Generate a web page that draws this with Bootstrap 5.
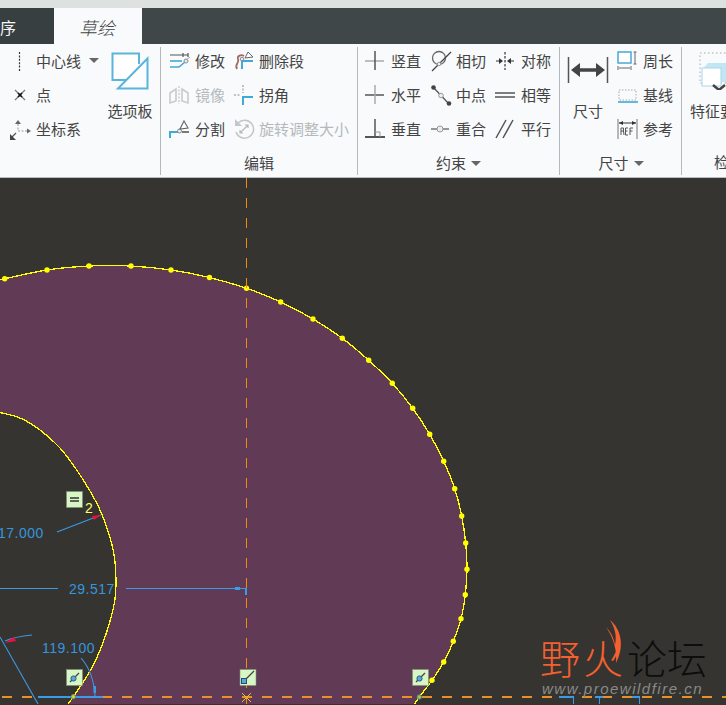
<!DOCTYPE html>
<html lang="zh">
<head>
<meta charset="utf-8">
<title>草绘</title>
<link href="https://cdn.jsdelivr.net/npm/bootstrap@5.3.0/dist/css/bootstrap.min.css" rel="stylesheet">
<style>
html,body{margin:0;height:705px;overflow:hidden;background:#353431}
body{font-family:"Noto Sans CJK SC","Noto Sans",sans-serif;font-size:15px;line-height:20px;color:#444}
.app-shell{width:726px;height:705px;overflow:hidden}
.top-strip{height:8px;background:#dde2e0}
.tab-bar{height:36px;background:#3f4748}
.tab-old{width:54px;background:#383f41;color:#f4f6f6;font-size:16px;line-height:38px}
.tab-on{width:88px;background:#f8fafb;color:#444;font-size:18px;font-style:italic;line-height:38px;font-weight:300;text-align:center;padding-right:2px}
.ribbon{height:134px;background:#f8fafb;overflow:hidden;border-bottom:1px solid #b9bdbf}
.rib-sep{width:1px;margin:3px 0 2px;background:#b4b9bb;flex:none}
.rib-group{flex:none;height:133px}
.rib-body{height:102px}
.rib-label{height:32px;line-height:34px;white-space:nowrap}
.g1{width:160px}.g2{width:196px}.g3{width:201px}.g4{width:121px;padding-left:5px}.g5{width:94px}
.g1-tools{width:99px;padding-left:2px}
.g2-tools{padding-left:8px}
.g3-tools{padding-left:7px}
.col-64{width:64px}
.col-65{width:65px}
.g5-body{padding:8px 0 0 8px;white-space:nowrap}
.g5-icon{display:block;margin:0 0 11px 2px}
.tool{height:34px;display:flex;align-items:center;gap:4px;white-space:nowrap}
.tool svg{flex:none;width:22px;height:22px}
.tool-off{color:#b5b9bb}
.big-col{width:46px;padding-top:8px;text-align:center;white-space:nowrap}
.big-col svg{display:block;margin:0 auto 11px}
.big-gap{margin-right:6px}
.tri{display:inline-block;width:0;height:0;border-left:5px solid transparent;border-right:5px solid transparent;border-top:5px solid #666;vertical-align:middle;margin-left:5px;margin-top:-2px}
.tri-near{margin-left:4px}
.cv{display:block;background:#353431;width:726px;height:526px}
.dim{font-family:"Liberation Sans",sans-serif;font-size:14px;letter-spacing:.5px;fill:#3596dd}
.wm-cjk{font-family:"Noto Sans CJK SC",sans-serif;font-size:40px;font-weight:300}
.wm-url{font-family:"Liberation Sans",sans-serif;font-size:15px;font-style:italic;letter-spacing:1.5px;fill:#8a8a88}
.crisp{shape-rendering:crispEdges}
</style>
</head>
<body>
<div class="app-shell d-flex flex-column">
  <div class="top-strip"></div>
  <div class="tab-bar d-flex">
    <div class="tab-old">序</div>
    <div class="tab-on">草绘</div>
  </div>
  <div class="ribbon d-flex">
    <!-- group 1 -->
    <div class="rib-group g1 d-flex ps-2">
      <div class="g1-tools d-flex flex-column">
        <div class="tool">
          <svg viewBox="0 0 22 22"><path d="M9.5 2V21" stroke="#333" stroke-width="1.2" stroke-dasharray="2 1.4"/></svg>
          <span>中心线</span><span class="tri tri-near"></span>
        </div>
        <div class="tool">
          <svg viewBox="0 0 22 22"><path d="M5 6L15 16M15 6L5 16" stroke="#777" stroke-width="1.2"/><path d="M8 9L12 13M12 9L8 13" stroke="#111" stroke-width="1.6"/></svg>
          <span>点</span>
        </div>
        <div class="tool">
          <svg viewBox="0 0 22 22"><path d="M8 6V13H17" stroke="#999" fill="none" stroke-dasharray="2 1.5"/><path d="M8 2L5 6H11Z" fill="#666"/><path d="M21 13L17 10.5V15.5Z" fill="#666"/><path d="M6 15L1 20" stroke="#555" stroke-width="1.3"/><path d="M-1 22V15L6 22Z" fill="#444"/></svg>
          <span>坐标系</span>
        </div>
      </div>
      <div class="big-col">
        <svg width="38" height="38" viewBox="0 0 38 38"><path d="M28 12V1.5H1.5V28H16" fill="#fff" stroke="#5ab5dc" stroke-width="2"/><path d="M36.5 6.5V36.5H7Z" fill="#fbfdfe" stroke="#5ab5dc" stroke-width="2"/></svg>
        <span>选项板</span>
      </div>
    </div>
    <div class="rib-sep"></div>
    <!-- group 2 -->
    <div class="rib-group g2 d-flex flex-column">
      <div class="rib-body g2-tools d-flex">
        <div class="col-64">
          <div class="tool">
            <svg viewBox="0 0 22 22"><path d="M1 5H19M14 3V7M19 3V7" stroke="#555" stroke-width="1.2" fill="none"/><path d="M1 11H13" stroke="#3fa9d8" stroke-width="1.6"/><path d="M1 17H10L16 12" stroke="#3fa9d8" stroke-width="1.6" fill="none"/><circle cx="17" cy="11" r="2" fill="#eee" stroke="#888"/><path d="M17 10L21 7" stroke="#aaa"/></svg>
            <span>修改</span>
          </div>
          <div class="tool tool-off">
            <svg viewBox="0 0 22 22"><path d="M1 9L7 5V17L1 19ZM19 9L13 5V17L19 19Z" fill="none" stroke="#c8cbcd" stroke-width="1.6"/><path d="M10 2V20" stroke="#bbb" stroke-dasharray="2 1.5"/></svg>
            <span>镜像</span>
          </div>
          <div class="tool">
            <svg viewBox="0 0 22 22"><path d="M1 20V14H9" stroke="#3fa9d8" stroke-width="2" fill="none"/><path d="M13 14H20" stroke="#333" stroke-width="1.3"/><circle cx="10.5" cy="13" r="2" fill="#eee" stroke="#888"/><path d="M11 11L15 3L19 10Z" fill="#fff" stroke="#666" stroke-width="1.1"/></svg>
            <span>分割</span>
          </div>
        </div>
        <div>
          <div class="tool">
            <svg viewBox="0 0 22 22"><path d="M4 19C1 14 7 13 5 9C4 6 8 4 11 6" stroke="#a46a62" stroke-width="1.8" fill="none"/><path d="M9 19V11H20" stroke="#3fa9d8" stroke-width="2" fill="none"/><circle cx="9" cy="9" r="1.8" fill="#eee" stroke="#888"/><path d="M12 8L15 2L20 7Z" fill="#fff" stroke="#666"/></svg>
            <span>删除段</span>
          </div>
          <div class="tool">
            <svg viewBox="0 0 22 22"><path d="M10 1V9" stroke="#888" stroke-dasharray="2 1.5"/><path d="M1 11H8" stroke="#888" stroke-dasharray="2 1.5"/><path d="M10 21V13H20" stroke="#3fa9d8" stroke-width="2" fill="none"/></svg>
            <span>拐角</span>
          </div>
          <div class="tool tool-off">
            <svg viewBox="0 0 22 22"><path d="M5 5A9 9 0 1 1 3 14" stroke="#c4c7c9" stroke-width="1.5" fill="none"/><path d="M2 1V8H9Z" fill="#c4c7c9"/><path d="M7 15L15 7M12 7H15V10M7 12V15H10" stroke="#b6babc" stroke-width="1.2" fill="none"/></svg>
            <span>旋转调整大小</span>
          </div>
        </div>
      </div>
      <div class="rib-label text-center">编辑</div>
    </div>
    <div class="rib-sep"></div>
    <!-- group 3 -->
    <div class="rib-group g3 d-flex flex-column">
      <div class="rib-body g3-tools d-flex">
        <div class="col-65">
          <div class="tool">
            <svg viewBox="0 0 22 22"><path d="M0 11H19" stroke="#aaa" stroke-width="1.5"/><path d="M10 1V20" stroke="#555" stroke-width="1.5"/></svg>
            <span>竖直</span>
          </div>
          <div class="tool">
            <svg viewBox="0 0 22 22"><path d="M0 11H19" stroke="#555" stroke-width="1.5"/><path d="M10 1V20" stroke="#aaa" stroke-width="1.5"/></svg>
            <span>水平</span>
          </div>
          <div class="tool">
            <svg viewBox="0 0 22 22"><path d="M0 19H20" stroke="#555" stroke-width="2"/><path d="M10 1V19" stroke="#555" stroke-width="1.5"/><path d="M10 14H15V19" stroke="#999" fill="none"/></svg>
            <span>垂直</span>
          </div>
        </div>
        <div class="col-65">
          <div class="tool">
            <svg viewBox="0 0 22 22"><circle cx="9" cy="8" r="6.5" fill="none" stroke="#666" stroke-width="1.3"/><path d="M2 21L21 2" stroke="#444" stroke-width="1.3"/><circle cx="9" cy="14" r="1.8" fill="#eee" stroke="#999"/></svg>
            <span>相切</span>
          </div>
          <div class="tool">
            <svg viewBox="0 0 22 22"><path d="M3 3L19 20" stroke="#555" stroke-width="1.3"/><circle cx="3.5" cy="3.5" r="2.3" fill="#444"/><circle cx="19" cy="19.5" r="2.3" fill="#444"/><circle cx="11" cy="11.5" r="2.3" fill="#eee" stroke="#999"/></svg>
            <span>中点</span>
          </div>
          <div class="tool">
            <svg viewBox="0 0 22 22"><path d="M1 11H19" stroke="#555" stroke-width="1.2"/><circle cx="10" cy="11" r="3" fill="#eee" stroke="#999"/></svg>
            <span>重合</span>
          </div>
        </div>
        <div>
          <div class="tool">
            <svg viewBox="0 0 22 22"><path d="M10 2V20" stroke="#333" stroke-width="1.2" stroke-dasharray="2.5 1.5"/><path d="M1 11H7M13 11H19" stroke="#333" stroke-width="1.2"/><path d="M8 11L4 8V14ZM12 11L16 8V14Z" fill="#333"/></svg>
            <span>对称</span>
          </div>
          <div class="tool">
            <svg viewBox="0 0 22 22"><path d="M0 9H20M0 13H20" stroke="#555" stroke-width="1.5"/></svg>
            <span>相等</span>
          </div>
          <div class="tool">
            <svg viewBox="0 0 22 22"><path d="M1 20L11 2M8 20L18 2" stroke="#555" stroke-width="1.5"/></svg>
            <span>平行</span>
          </div>
        </div>
      </div>
      <div class="rib-label text-center">约束<span class="tri"></span></div>
    </div>
    <div class="rib-sep"></div>
    <!-- group 4 -->
    <div class="rib-group g4 d-flex flex-wrap align-content-start">
      <div class="rib-body big-col big-gap">
        <svg width="46" height="38" viewBox="0 0 46 38"><path d="M3.5 5V31M42.5 5V31" stroke="#555" stroke-width="1.5"/><path d="M9 18H37" stroke="#444" stroke-width="3.5"/><path d="M6 18L15 11V25ZM40 18L31 11V25Z" fill="#444"/></svg>
        <span>尺寸</span>
      </div>
      <div class="rib-body col-64">
        <div class="tool">
          <svg viewBox="0 0 22 22"><rect x="1" y="2" width="13" height="11" fill="#fff" stroke="#4aa8d8" stroke-width="1.5"/><path d="M18 2V14M16.5 2H19.5M16.5 14H19.5M2 18H13M1 16V20M14 16V20" stroke="#666"/></svg>
          <span>周长</span>
        </div>
        <div class="tool">
          <svg viewBox="0 0 22 22"><rect x="2" y="6" width="17" height="10" fill="none" stroke="#aaa" stroke-dasharray="1.5 1.5"/><path d="M1 18H21" stroke="#3fa9d8" stroke-width="1.6"/></svg>
          <span>基线</span>
        </div>
        <div class="tool">
          <svg viewBox="0 0 22 22"><path d="M1 1V21M20 1V21" stroke="#777"/><path d="M2 5H19" stroke="#333"/><path d="M2 5L6 3V7ZM19 5L15 3V7Z" fill="#333"/><path d="M4 17V10H6.5V13H4M6.5 13L7 17M8.5 10V17M8.5 10H11M8.5 13H10.5M8.5 17H11M13 17V10H16M13 13H15.5" stroke="#555" stroke-width="1" fill="none"/></svg>
          <span>参考</span>
        </div>
      </div>
      <div class="rib-label text-center w-100 pe-1">尺寸<span class="tri"></span></div>
    </div>
    <div class="rib-sep"></div>
    <!-- group 5 -->
    <div class="rib-group g5 d-flex flex-column">
      <div class="rib-body g5-body">
        <svg class="g5-icon" width="50" height="38" viewBox="0 0 50 38"><rect x="8" y="1" width="28" height="30" fill="none" stroke="#aaa" stroke-dasharray="1.5 2.5"/><path d="M10 18L16 11H38V30H17L10 33Z" fill="#c3e6f4"/><rect x="10" y="16" width="19" height="18" fill="#fff" stroke="#a7d6ea"/><path d="M21 33L27 38L33 33" stroke="#444" stroke-width="2.5" fill="none"/></svg>
        <span>特征要求</span>
      </div>
      <div class="rib-label text-center">检查</div>
    </div>
  </div>

  <svg class="cv" viewBox="0 179 726 526" xmlns="http://www.w3.org/2000/svg">
    <path id="fillShape" fill="#613a56"/>
    <path id="outerLine" class="crisp" fill="none" stroke="#ffff00" stroke-width="1.3"/>
    <path id="innerLine" class="crisp" fill="none" stroke="#ffff00" stroke-width="1.3"/>
    <g id="dots" fill="#ffff00"></g>

    <!-- axes -->
    <path class="crisp" d="M246.5 179V705" stroke="#f08a10" stroke-width="1.2" stroke-dasharray="10 10"/>
    <path class="crisp" d="M2 698H726" stroke="#e8912a" stroke-width="1.1" stroke-dasharray="10 10"/>
    <path d="M242 694L251 703M251 694L242 703" stroke="#e9c23a" stroke-width="1"/>

    <!-- dimensions -->
    <g fill="none" stroke="#3a9be6" stroke-width="1.1">
      <path d="M57 533L101 516"/>
      <path class="crisp" d="M0 589.5H58M126 589.5H246V596"/>
      <path d="M0 638L38 705"/>
      <path d="M5 642C14 638 22 637 32 636"/>
      <path d="M81 659C89 668 94 680 95 697"/>
      <path class="crisp" d="M38 698H103"/>
      <path class="crisp" d="M559 698H573.5V705M595 698H603M599.5 698V705M632 698H640M639.5 698V705" stroke-width="1.3"/>
    </g>
    <path d="M235 588H240V591H235Z" fill="#3a9be6"/>
    <path d="M93.5 687H96V694H93.5Z" fill="#3a9be6"/>
    <path d="M101 516L92 517L94 521Z" fill="#f0103c"/>
    <path d="M5 644L14 638L16 642Z" fill="#f0103c"/>
    <text class="dim" x="-2" y="539">17.000</text>
    <text class="dim" x="69" y="595">29.517</text>
    <text class="dim" x="42" y="654">119.100</text>
    <text x="85" y="514" font-family="Liberation Sans,sans-serif" font-size="14" fill="#ffff66">2</text>

    <!-- constraint markers -->
    <g stroke="#7f8f78" stroke-width=".6" fill="#d7f6c4">
      <rect x="66.5" y="492.5" width="16" height="16"/>
      <rect x="66.5" y="670.5" width="16" height="16"/>
      <rect x="240" y="670.5" width="16" height="16"/>
      <rect x="412.5" y="670.5" width="16" height="16"/>
    </g>
    <path d="M70 499H79M70 502H79" stroke="#333" stroke-width="1.3"/>
    <path d="M70 683L79 674" stroke="#444" stroke-width="1.3"/><circle cx="73.5" cy="679.5" r="2.6" fill="#5aa6d6" stroke="#2d5c80"/>
    <path d="M416 683L425 674" stroke="#444" stroke-width="1.3"/><circle cx="419.5" cy="679.5" r="2.6" fill="#5aa6d6" stroke="#2d5c80"/>
    <path d="M246 680L254 672" stroke="#444" stroke-width="1.3"/><rect x="241.5" y="679.5" width="5" height="5" fill="#5aa6d6" stroke="#1f4f78"/>
    <circle cx="73.3" cy="697.7" r="2.2" fill="#c8d83a" stroke="#5f8f60"/>
    <circle cx="419.3" cy="698" r="2.2" fill="#a8c060" stroke="#4f8f80"/>

    <!-- watermark -->
    <text class="wm-cjk" x="540" y="675" fill="#f4602f">野</text>
    <text class="wm-cjk" x="583" y="675" fill="#f4602f">火</text>
    <path d="M610 621C621 630 625 647 616 664C617 651 614 640 606 628C611 633 614 639 615 646C617 637 615 629 610 621Z" fill="#f4602f"/>
    <text class="wm-cjk" x="627" y="675" fill="#0d0d0c">论坛</text>
    <text class="wm-url" x="542" y="695">www.proewildfire.cn</text>
  </svg>
</div>
<script src="https://cdn.jsdelivr.net/npm/bootstrap@5.3.0/dist/js/bootstrap.bundle.min.js"></script>
<script>
// Smooth the sketch outline through its spline points (Catmull-Rom to Bezier).
var outer=[[-6,282],[4.7,279.7],[47,271],[89,267],[131,267],[171,271],[209.5,278.5],[246.5,289.3],[280.7,303],[313,320],[342.3,339.3],[368.7,361.3],[392.3,384.3],[412.7,409.3],[429.7,435.3],[443.7,462.3],[454.7,489.7],[461.7,517],[465.7,544],[467,570.3],[465.3,595.7],[461,619.7],[453.3,642.3],[443.7,663],[432,681.3],[419.3,698],[411,710]];
var inner=[[65,709],[73.3,697.7],[93,666.7],[106.7,633],[115,600],[115.7,573],[112.5,548],[101.7,515],[90,492],[76,470],[60,449],[40,431],[20,419],[0,413.5],[-8,412]];
function seg(p){var d="";for(var i=0;i<p.length-1;i++){var a=p[i-1]||p[i],b=p[i],c=p[i+1],e=p[i+2]||c;
d+="C"+(b[0]+(c[0]-a[0])/6).toFixed(1)+" "+(b[1]+(c[1]-a[1])/6).toFixed(1)+" "+(c[0]-(e[0]-b[0])/6).toFixed(1)+" "+(c[1]-(e[1]-b[1])/6).toFixed(1)+" "+c[0]+" "+c[1];}return d;}
var o="M"+outer[0].join(" ")+seg(outer),n="M"+inner[0].join(" ")+seg(inner);
document.getElementById("outerLine").setAttribute("d",o);
document.getElementById("innerLine").setAttribute("d",n);
document.getElementById("fillShape").setAttribute("d",o+"L"+inner[0].join(" ")+seg(inner)+"Z");
var g=document.getElementById("dots");
outer.slice(1,25).forEach(function(p){var c=document.createElementNS("http://www.w3.org/2000/svg","circle");c.setAttribute("cx",p[0]);c.setAttribute("cy",p[1]);c.setAttribute("r",2.7);g.appendChild(c);});
</script>
</body>
</html>
